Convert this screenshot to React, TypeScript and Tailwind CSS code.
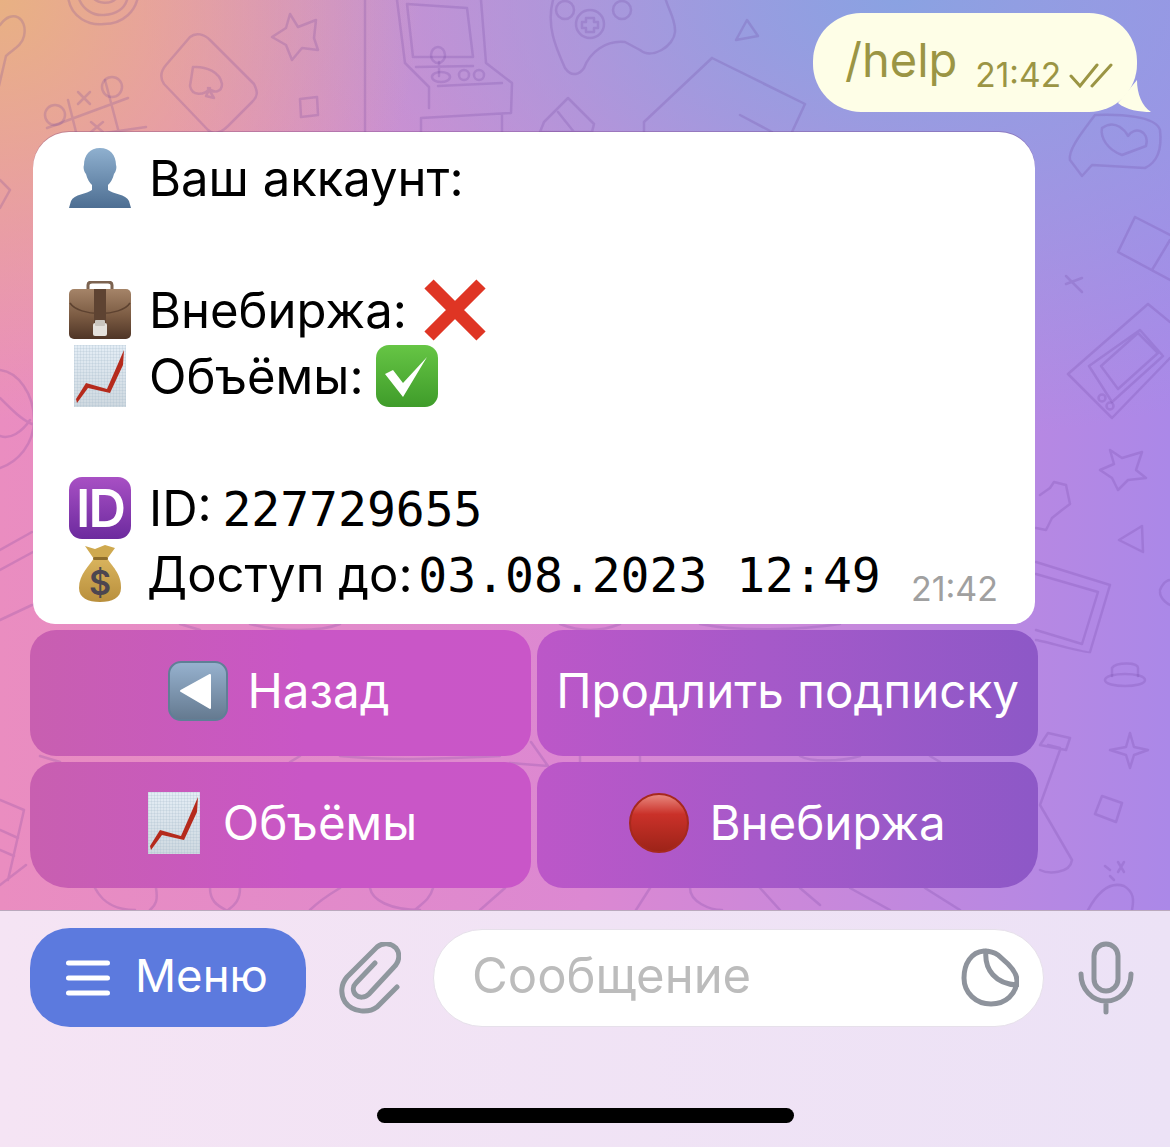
import type { ReactNode } from "react";

const sans = "font-['Inter','Noto_Sans',sans-serif]";
const mono = "font-['DejaVu_Sans_Mono','Liberation_Mono',monospace]";

function Person() {
    return (
        <svg width="62" height="60" viewBox="0 0 62 60">
            <defs>
                <linearGradient id="person" x1="0" y1="0" x2="0" y2="1">
                    <stop offset="0" stopColor="#8fb0cf" />
                    <stop offset="1" stopColor="#4d6e92" />
                </linearGradient>
            </defs>
            <path
                fill="url(#person)"
                d="M31 0C21 0 15 7 15 17C14 19 15 24 17 26C18 31 21 35 23 37L23 42C18 46 5 46 2 53L0 60L62 60L60 53C57 46 44 46 39 42L39 37C41 35 44 31 45 26C47 24 48 19 47 17C47 7 41 0 31 0Z"
            />
        </svg>
    );
}

function Briefcase() {
    return (
        <svg width="62" height="58" viewBox="0 0 62 58">
            <defs>
                <linearGradient id="case" x1="0" y1="0" x2="0" y2="1">
                    <stop offset="0" stopColor="#a58468" />
                    <stop offset="0.55" stopColor="#7a5a42" />
                    <stop offset="1" stopColor="#4f3526" />
                </linearGradient>
            </defs>
            <path d="M19 9V4C19 2 21 1 23 1H39C41 1 43 2 43 4V9" fill="none" stroke="#7c6350" strokeWidth="3" />
            <rect x="0" y="8" width="62" height="50" rx="5" fill="url(#case)" />
            <path d="M1 22C10 36 52 36 61 22" fill="none" stroke="#5d4230" strokeWidth="1.5" />
            <rect x="25" y="8" width="12" height="36" fill="#5e4332" />
            <rect x="24" y="42" width="14" height="13" rx="2" fill="#e4e1dc" />
            <rect x="26" y="39" width="10" height="6" rx="1" fill="#c9c5be" />
        </svg>
    );
}

function Cross() {
    return (
        <svg width="62" height="62" viewBox="0 0 62 62">
            <path d="M5 5L57 57M57 5L5 57" stroke="#df3524" strokeWidth="13" />
        </svg>
    );
}

function Chart({ className = "" }: { className?: string }) {
    return (
        <svg className={className} width="52" height="62" viewBox="0 0 52 62">
            <defs>
                <linearGradient id="sheet" x1="0" y1="0" x2="0" y2="1">
                    <stop offset="0" stopColor="#e4edf5" />
                    <stop offset="1" stopColor="#cfd9e0" />
                </linearGradient>
                <pattern id="gridline" width="3" height="3" patternUnits="userSpaceOnUse">
                    <path d="M3 0H0V3" fill="none" stroke="#a9bccb" strokeWidth="0.5" />
                </pattern>
            </defs>
            <rect width="52" height="62" fill="url(#sheet)" />
            <rect width="52" height="62" fill="url(#gridline)" />
            <path d="M2 54L12 38L33 44L50 5L49 20L36 48L14 43L3 58Z" fill="#b52a1c" />
        </svg>
    );
}

function Check({ className = "" }: { className?: string }) {
    return (
        <svg className={className} width="62" height="62" viewBox="0 0 62 62">
            <defs>
                <linearGradient id="green" x1="0" y1="0" x2="0" y2="1">
                    <stop offset="0" stopColor="#66c545" />
                    <stop offset="1" stopColor="#3f9c2a" />
                </linearGradient>
            </defs>
            <rect width="62" height="62" rx="13" fill="url(#green)" />
            <path d="M9 29L17 25L27 38L51 12L27 52Z" fill="#fff" />
        </svg>
    );
}

function IdBadge() {
    return (
        <svg width="62" height="62" viewBox="0 0 62 62">
            <defs>
                <linearGradient id="purple" x1="0" y1="0" x2="0" y2="1">
                    <stop offset="0" stopColor="#a850c4" />
                    <stop offset="1" stopColor="#6c2a9e" />
                </linearGradient>
            </defs>
            <rect width="62" height="62" rx="13" fill="url(#purple)" />
            <text x="31" y="50" textAnchor="middle" fontFamily="Inter, sans-serif" fontWeight="600" fontSize="52" letterSpacing="-2" fill="#fff">
                ID
            </text>
        </svg>
    );
}

function MoneyBag() {
    return (
        <svg width="44" height="58" viewBox="0 0 44 58">
            <defs>
                <linearGradient id="bag" x1="0" y1="0" x2="0" y2="1">
                    <stop offset="0" stopColor="#d9b45e" />
                    <stop offset="1" stopColor="#b98f3c" />
                </linearGradient>
            </defs>
            <path d="M7 1L17 4L27 0L37 3L29 14L16 14Z" fill="#cfa94f" />
            <path d="M16 13H29C33 20 44 29 43 43C43 53 34 57 22 57C10 57 1 53 1 43C1 29 12 20 16 13Z" fill="url(#bag)" />
            <rect x="15" y="12" width="15" height="3" rx="1.5" fill="#8d6c2a" />
            <text x="22" y="50" textAnchor="middle" fontFamily="Inter, sans-serif" fontWeight="600" fontSize="34" fill="#4c4650">
                $
            </text>
        </svg>
    );
}

function BackArrow() {
    return (
        <svg width="60" height="60" viewBox="0 0 60 60">
            <defs>
                <linearGradient id="backbox" x1="0" y1="0" x2="0" y2="1">
                    <stop offset="0" stopColor="#97b2cf" />
                    <stop offset="1" stopColor="#64798f" />
                </linearGradient>
            </defs>
            <rect x="1" y="1" width="58" height="58" rx="12" fill="url(#backbox)" stroke="#5f7f96" strokeWidth="2" />
            <path d="M13 30L42 14V47Z" fill="#fff" strokeLinejoin="round" stroke="#fff" strokeWidth="2" />
        </svg>
    );
}

function RedDot() {
    return (
        <svg width="60" height="60" viewBox="0 0 60 60">
            <defs>
                <linearGradient id="reddot" x1="0" y1="0" x2="0" y2="1">
                    <stop offset="0" stopColor="#e98b82" />
                    <stop offset="0.35" stopColor="#ca3129" />
                    <stop offset="1" stopColor="#9c2318" />
                </linearGradient>
            </defs>
            <circle cx="30" cy="30" r="29" fill="url(#reddot)" stroke="#a6291d" strokeWidth="2" />
        </svg>
    );
}

// faint doodle wallpaper behind the chat, in page coordinates
function Wallpaper() {
    return (
        <svg className="absolute inset-0" width="1170" height="910" viewBox="0 0 1170 910" fill="none" stroke="#6a3a9c" strokeOpacity="0.2" strokeWidth="2.5" strokeLinejoin="round" strokeLinecap="round">
            {/* top row */}
            <path d="M0 25C12 8 28 18 24 36C22 46 12 50 6 56L-2 90" />
            <path d="M68 -4C70 18 90 26 104 24C124 24 136 10 138 -4M78 -4C82 10 94 16 104 15C118 14 126 8 128 -4M92 -4C96 4 112 6 118 -4" />
            <circle cx="112" cy="87" r="10" />
            <circle cx="55" cy="115" r="10" />
            <path d="M105 80L119 133M128 98L47 128M68 100L76 132M146 127L105 133M78 92L90 104M90 92L78 104M91 122L103 132M103 122L91 132" />
            <path d="M190 37L166 65C160 72 160 78 164 84L208 130C214 136 222 132 228 126L252 102C258 96 258 92 254 84L210 40C204 34 196 32 190 37Z" />
            <path d="M193 67C206 66 220 72 222 84C222 92 214 94 208 88L214 98L206 96L210 88C204 96 192 96 190 86Z" />
            <path d="M290 14L298 27L316 20L314 38L318 50L302 48L292 60L286 45L272 37L286 28Z" />
            <path d="M300 99L317 97L318 115L301 117Z" />
            <path d="M365 0V135" />
            <path d="M397 0L405 63L429 87V108M407 4L467 8L473 57L413 57ZM481 0L486 63L512 83L511 113L421 118V132M502 115V132" />
            <path d="M416 67L473 66M438 86L502 83M439 62V76" />
            <ellipse cx="438" cy="55" rx="7" ry="8" />
            <ellipse cx="441" cy="77" rx="9" ry="5" />
            <circle cx="464" cy="75" r="5" />
            <circle cx="479" cy="75" r="5" />
            <path d="M553 0C546 26 556 48 565 68C572 78 580 74 584 68C590 52 606 40 625 42L640 50C652 60 674 46 675 32C676 18 666 6 665 -4" />
            <circle cx="565" cy="10" r="9" />
            <circle cx="622" cy="10" r="9" />
            <circle cx="590" cy="24" r="14" />
            <path d="M586 18H594V22H598V28H594V32H586V28H582V22H586Z" />
            <path d="M747 20L758 36L736 40Z" />
            <path d="M568 98L594 124L592 132H540L544 122ZM558 112L574 132" />
            <path d="M712 58L805 104L792 132M712 58L644 122V132M740 115L772 132" />
            {/* right side */}
            <path d="M1095 115C1080 135 1068 150 1070 160L1082 176L1092 165L1145 168C1158 162 1162 148 1160 130C1156 116 1120 114 1095 115Z" />
            <path d="M1102 128C1116 118 1126 132 1128 136C1134 126 1150 130 1146 146L1122 155C1108 150 1100 138 1102 128Z" />
            <path d="M1135 217L1118 252L1170 280M1135 217L1170 235M1152 270L1170 240" />
            <path d="M1066 284L1082 278M1066 276L1082 292" />
            <path d="M1148 304L1068 374L1112 418L1170 358M1148 304L1170 322" />
            <path d="M1089 366L1112 402L1163 356L1140 330ZM1101 366L1118 389L1158 353L1138 333Z" />
            <circle cx="1102" cy="398" r="3.5" />
            <circle cx="1110" cy="406" r="3.5" />
            <path d="M1110 450L1122 458L1142 452L1136 470L1146 478L1128 480L1118 490L1112 478L1100 470L1114 464Z" />
            <path d="M1040 495L1050 488L1054 482L1066 485L1070 504L1062 510L1052 518L1046 530L1036 528" />
            <path d="M1119 540L1142 526L1143 552Z" />
            <path d="M1160 590C1164 580 1170 580 1170 580M1160 592C1160 600 1170 605 1170 605" />
            <path d="M1036 562L1110 585L1090 652C1088 654 1040 640 1036 640" />
            <path d="M1036 574L1098 592L1082 644L1036 630" />
            <path d="M1105 680C1105 672 1145 672 1145 680C1145 688 1105 688 1105 680Z" />
            <path d="M1112 676V668C1116 662 1138 662 1138 668V676" />
            <path d="M1130 733L1134 747L1148 750L1134 755L1130 768L1126 755L1110 750L1126 747Z" />
            <path d="M1102 796L1122 803L1116 822L1095 814Z" />
            <path d="M1048 733L1070 738L1066 750L1040 745ZM1048 745L1060 748M1060 750L1040 805L1072 860C1070 874 1048 874 1040 870" />
            <path d="M1105 866L1110 870M1118 862L1124 872M1124 862L1118 872M1110 876L1114 880" />
            <path d="M1088 910C1100 888 1112 882 1124 886C1134 892 1134 900 1132 910" />
            {/* left side */}
            <path d="M0 370C18 372 34 394 34 420C34 444 18 462 0 468M0 398C12 410 22 420 32 424M0 436C10 440 22 432 30 420" />
            <path d="M0 208L10 190L0 180" />
            <path d="M0 550L32 532M0 570L33 552M0 620L32 605" />
            <path d="M0 800L24 810L8 880M0 830L18 838M0 850L14 856M26 865L0 885" />
            {/* strip under the keyboard */}
            <path d="M95 888C104 905 118 910 135 910M156 888C158 900 156 905 150 910M210 888C210 900 216 905 226 910M240 888C240 900 235 905 228 910M340 888C320 900 315 905 310 910M370 888C372 900 390 910 420 910M433 888C430 900 420 905 415 910M505 888L480 910M650 888L636 910M690 888C690 902 710 910 722 910M760 888L780 910M800 888L820 905M850 888L890 910M925 888L960 910" />
            {/* gaps round the keyboard */}
            <path d="M180 624L200 630M250 624C280 632 320 632 340 624M560 624C580 632 600 632 620 624M700 624C740 632 800 630 840 624" />
            <path d="M40 756L60 762M300 756L290 762M340 756C380 760 420 760 500 756M531 742L548 766L510 763M580 756V762M640 756V762M800 756C810 762 840 762 860 756M930 756L940 762" />
        </svg>
    );
}

function Row({ icon, children }: { icon?: ReactNode; children?: ReactNode }) {
    return (
        <div className="flex h-[66px] items-center">
            <div className="flex w-[62px] justify-center">{icon}</div>
            <div className="ml-[18px] flex items-center gap-[17px] text-[49px] leading-none text-black">{children}</div>
        </div>
    );
}

function KeyButton({ left, radius, children }: { left: boolean; radius: string; children: ReactNode }) {
    return (
        <button
            className={`flex h-[126px] items-center justify-center pb-[5px] text-[47.5px] leading-none text-white ${radius} ${
                left
                    ? "bg-[linear-gradient(90deg,#c85fb0,#c956c6_55%,#c956c8)]"
                    : "bg-[linear-gradient(90deg,#bc57c8,#a659c9_45%,#8d58c7)]"
            }`}
        >
            {children}
        </button>
    );
}

export default function App() {
    return (
        <div className={`flex h-[1147px] w-[1170px] flex-col overflow-hidden ${sans}`}>
            <div className="relative h-[910px] shrink-0 bg-[radial-gradient(ellipse_420px_420px_at_0_0,#e8b183_0%,rgba(232,177,131,0)_100%),radial-gradient(ellipse_760px_440px_at_900px_0,#8aa2e2_0%,rgba(138,162,226,0)_100%),linear-gradient(90deg,#ea8dc0_0%,#dc88d2_50%,#ab88e8_100%)]">
                <Wallpaper />

                <div className="relative flex flex-col pt-[13px]">
                    {/* outgoing */}
                    <div className="relative mr-[33px] flex h-[99px] w-[324px] items-center self-end rounded-[48px] bg-[#fefee7] pl-[32px] text-[#9b9544]">
                        <span className="mb-[7px] text-[47px] leading-none">/help</span>
                        <span className="ml-[18px] mt-[26px] text-[33.5px] leading-none">21:42</span>
                        <svg className="ml-[8px] mt-[24px]" width="44" height="26" viewBox="0 0 44 26" fill="none" stroke="#9b9544" strokeWidth="3" strokeLinecap="round">
                            <path d="M2 14L11 24L28 3M23 24L42 3" />
                        </svg>
                        <svg className="absolute bottom-0 right-[-15px]" width="34" height="32" viewBox="0 0 34 32" fill="#fefee7">
                            <path d="M19 0C19 14 24 26 33 32C22 32 8 30 0 23Z" />
                        </svg>
                    </div>

                    {/* incoming */}
                    <div className="ml-[33px] mt-[20px] w-[1002px] rounded-[36px] rounded-b-[22px] bg-white pb-[17px] pl-[36px] pr-[37px] pt-[13px] shadow-[0_-1px_0_rgba(110,50,120,0.3)]">
                        <Row icon={<Person />}>
                            <span>Ваш аккаунт:</span>
                        </Row>
                        <Row />
                        <Row icon={<Briefcase />}>
                            <span>Внебиржа:</span>
                            <Cross />
                        </Row>
                        <Row icon={<Chart />}>
                            <span>Объёмы:</span>
                            <Check className="ml-[-5px]" />
                        </Row>
                        <Row />
                        <Row icon={<IdBadge />}>
                            <span>
                                ID: <span className={`${mono} ml-[-3px] text-[48px]`}>227729655</span>
                            </span>
                        </Row>
                        <div className="flex h-[66px] items-center">
                            <div className="flex w-[62px] justify-center">
                                <MoneyBag />
                            </div>
                            <div className="ml-[16px] whitespace-nowrap text-[49px] leading-none text-black">
                                Доступ до: <span className={`${mono} ml-[-8px] text-[48px]`}>03.08.2023 12:49</span>
                            </div>
                            <span className="ml-auto mt-[30px] text-[34px] leading-none text-[#a0a0a0]">21:42</span>
                        </div>
                    </div>

                    {/* inline keyboard */}
                    <div className="ml-[30px] mt-[6px] grid w-[1008px] grid-cols-2 gap-x-[6px] gap-y-[6px]">
                        <KeyButton left radius="rounded-[26px]">
                            <BackArrow />
                            <span className="ml-[20px] mr-[4px]">Назад</span>
                        </KeyButton>
                        <KeyButton left={false} radius="rounded-[26px]">
                            Продлить подписку
                        </KeyButton>
                        <KeyButton left radius="rounded-[26px] rounded-bl-[38px]">
                            <Chart className="ml-[4px]" />
                            <span className="ml-[23px]">Объёмы</span>
                        </KeyButton>
                        <KeyButton left={false} radius="rounded-[26px] rounded-br-[38px]">
                            <RedDot />
                            <span className="ml-[20px]">Внебиржа</span>
                        </KeyButton>
                    </div>
                </div>
            </div>

            {/* input panel */}
            <div className="flex flex-1 flex-col border-t border-[#baa9bd] bg-[linear-gradient(90deg,#f5e4f4,#ece2f6)]">
                <div className="flex items-center pl-[30px] pt-[17px]">
                    <div className="flex h-[99px] w-[276px] items-center rounded-[40px] bg-[#5c7ade] pl-[36px] text-white">
                        <svg width="44" height="36" viewBox="0 0 44 36" stroke="#fff" strokeWidth="5" strokeLinecap="round">
                            <path d="M2.5 3H41.5M2.5 18H41.5M2.5 33H41.5" />
                        </svg>
                        <span className="mb-[3px] ml-[25px] text-[45.5px] leading-none">Меню</span>
                    </div>
                    <svg className="ml-[33px]" width="62" height="72" viewBox="0 0 62 72" fill="none" stroke="#8f979e" strokeWidth="5" strokeLinecap="round">
                        <path d="M58 45L38 65C30 71 14 71 6 60C1 52 2 42 8 35L38 5C44 0 52 1 57 6C61 11 61 19 55 25L30 52C26 56 20 56 17 53C13 49 14 44 17 41L36 21" />
                    </svg>
                    <div className="ml-[32px] flex h-[98px] w-[611px] items-center justify-between rounded-full border border-[#e6e0ea] bg-white pl-[38px] pr-[24px]">
                        <span className="mb-[4px] text-[49px] leading-none text-[#bcbcbc]">Сообщение</span>
                        <svg width="58" height="59" viewBox="0 0 58 59" fill="none" stroke="#8e939c" strokeWidth="5" strokeLinecap="round">
                            <path d="M23 3C10 4 3 16 3 30C3 45 15 56 30 56C45 56 55 46 56 33C56 27 52 21 47 16L37 7C33 4 29 3 23 3ZM25 3C23 22 35 36 56 37" />
                        </svg>
                    </div>
                    <svg className="ml-[34px]" width="56" height="74" viewBox="0 0 56 74" fill="none" stroke="#8e939c" strokeWidth="5" strokeLinecap="round">
                        <rect x="16" y="3" width="24" height="47" rx="12" />
                        <path d="M3 33C3 48 14 60 28 60C42 60 53 48 53 33M28 60V71" />
                    </svg>
                </div>
                <div className="mt-[81px] h-[15px] w-[417px] self-center rounded-full bg-black" />
            </div>
        </div>
    );
}
